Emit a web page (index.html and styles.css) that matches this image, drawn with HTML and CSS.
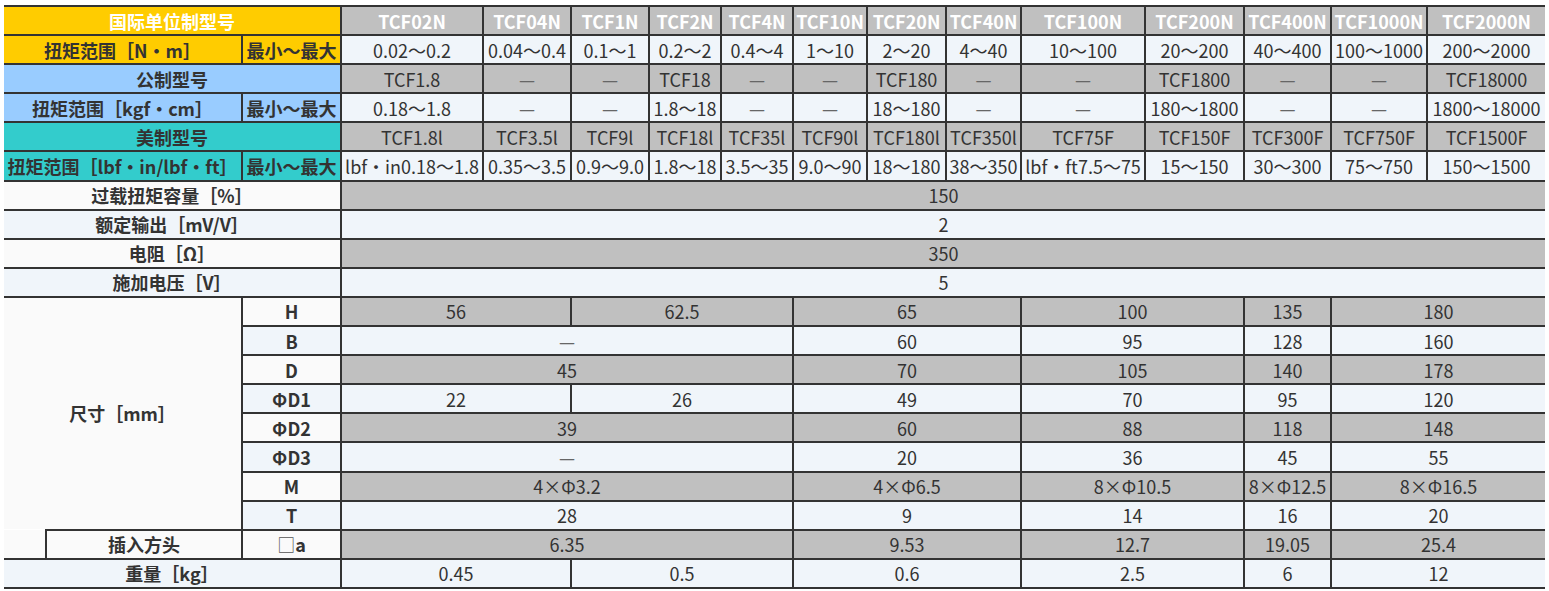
FILE: index.html
```html
<!DOCTYPE html>
<html lang="zh-CN">
<head>
<meta charset="utf-8">
<title>TCF 规格表</title>
<link rel="stylesheet" href="styles.css">
</head>
<body>
<table class="spec">
  <colgroup>
    <col class="c-a"><col class="c-b"><col class="c-c">
    <col class="d1"><col class="d2"><col class="d3"><col class="d4"><col class="d5"><col class="d6"><col class="d7"><col class="d8"><col class="d9"><col class="d10"><col class="d11"><col class="d12"><col class="d13">
  </colgroup>
  <tr>
    <th colspan="3" class="yel hd">国际单位制型号</th>
    <th class="gr hd">TCF02N</th><th class="gr hd">TCF04N</th><th class="gr hd">TCF1N</th><th class="gr hd">TCF2N</th><th class="gr hd">TCF4N</th><th class="gr hd">TCF10N</th><th class="gr hd">TCF20N</th><th class="gr hd">TCF40N</th><th class="gr hd">TCF100N</th><th class="gr hd">TCF200N</th><th class="gr hd">TCF400N</th><th class="gr hd">TCF1000N</th><th class="gr hd">TCF2000N</th>
  </tr>
  <tr>
    <td colspan="2" class="yel lb">扭矩范围［N・m］</td><td class="yel lb">最小～最大</td>
    <td class="lt">0.02～0.2</td><td class="lt">0.04～0.4</td><td class="lt">0.1～1</td><td class="lt">0.2～2</td><td class="lt">0.4～4</td><td class="lt">1～10</td><td class="lt">2～20</td><td class="lt">4～40</td><td class="lt">10～100</td><td class="lt">20～200</td><td class="lt">40～400</td><td class="lt">100～1000</td><td class="lt">200～2000</td>
  </tr>
  <tr>
    <td colspan="3" class="blu lb">公制型号</td>
    <td class="gr">TCF1.8</td><td class="gr dash">—</td><td class="gr dash">—</td><td class="gr">TCF18</td><td class="gr dash">—</td><td class="gr dash">—</td><td class="gr">TCF180</td><td class="gr dash">—</td><td class="gr dash">—</td><td class="gr">TCF1800</td><td class="gr dash">—</td><td class="gr dash">—</td><td class="gr">TCF18000</td>
  </tr>
  <tr>
    <td colspan="2" class="blu lb">扭矩范围［kgf・cm］</td><td class="blu lb">最小～最大</td>
    <td class="lt">0.18～1.8</td><td class="lt dash">—</td><td class="lt dash">—</td><td class="lt">1.8～18</td><td class="lt dash">—</td><td class="lt dash">—</td><td class="lt">18～180</td><td class="lt dash">—</td><td class="lt dash">—</td><td class="lt">180～1800</td><td class="lt dash">—</td><td class="lt dash">—</td><td class="lt">1800～18000</td>
  </tr>
  <tr>
    <td colspan="3" class="tea lb">美制型号</td>
    <td class="gr">TCF1.8l</td><td class="gr">TCF3.5l</td><td class="gr">TCF9l</td><td class="gr">TCF18l</td><td class="gr">TCF35l</td><td class="gr">TCF90l</td><td class="gr">TCF180l</td><td class="gr">TCF350l</td><td class="gr">TCF75F</td><td class="gr">TCF150F</td><td class="gr">TCF300F</td><td class="gr">TCF750F</td><td class="gr">TCF1500F</td>
  </tr>
  <tr>
    <td colspan="2" class="tea lb">扭矩范围［lbf・in/lbf・ft］</td><td class="tea lb">最小～最大</td>
    <td class="lt">lbf・in0.18～1.8</td><td class="lt">0.35～3.5</td><td class="lt">0.9～9.0</td><td class="lt">1.8～18</td><td class="lt">3.5～35</td><td class="lt">9.0～90</td><td class="lt">18～180</td><td class="lt">38～350</td><td class="lt">lbf・ft7.5～75</td><td class="lt">15～150</td><td class="lt">30～300</td><td class="lt">75～750</td><td class="lt">150～1500</td>
  </tr>
  <tr>
    <td colspan="3" class="wh lb">过载扭矩容量［%］</td><td colspan="13" class="gr">150</td>
  </tr>
  <tr>
    <td colspan="3" class="lt lb">额定输出［mV/V］</td><td colspan="13" class="lt">2</td>
  </tr>
  <tr>
    <td colspan="3" class="wh lb">电阻［Ω］</td><td colspan="13" class="gr">350</td>
  </tr>
  <tr>
    <td colspan="3" class="lt lb">施加电压［V］</td><td colspan="13" class="lt">5</td>
  </tr>
  <tr>
    <td colspan="2" rowspan="8" class="wh lb">尺寸［mm］</td><td class="wh lb">H</td>
    <td colspan="2" class="gr">56</td><td colspan="3" class="gr">62.5</td><td colspan="3" class="gr">65</td><td colspan="2" class="gr">100</td><td class="gr">135</td><td colspan="2" class="gr">180</td>
  </tr>
  <tr>
    <td class="lt lb">B</td>
    <td colspan="5" class="lt dash">—</td><td colspan="3" class="lt">60</td><td colspan="2" class="lt">95</td><td class="lt">128</td><td colspan="2" class="lt">160</td>
  </tr>
  <tr>
    <td class="wh lb">D</td>
    <td colspan="5" class="gr">45</td><td colspan="3" class="gr">70</td><td colspan="2" class="gr">105</td><td class="gr">140</td><td colspan="2" class="gr">178</td>
  </tr>
  <tr>
    <td class="lt lb">ΦD1</td>
    <td colspan="2" class="lt">22</td><td colspan="3" class="lt">26</td><td colspan="3" class="lt">49</td><td colspan="2" class="lt">70</td><td class="lt">95</td><td colspan="2" class="lt">120</td>
  </tr>
  <tr>
    <td class="wh lb">ΦD2</td>
    <td colspan="5" class="gr">39</td><td colspan="3" class="gr">60</td><td colspan="2" class="gr">88</td><td class="gr">118</td><td colspan="2" class="gr">148</td>
  </tr>
  <tr>
    <td class="lt lb">ΦD3</td>
    <td colspan="5" class="lt dash">—</td><td colspan="3" class="lt">20</td><td colspan="2" class="lt">36</td><td class="lt">45</td><td colspan="2" class="lt">55</td>
  </tr>
  <tr>
    <td class="wh lb">M</td>
    <td colspan="5" class="gr">4×Φ3.2</td><td colspan="3" class="gr">4×Φ6.5</td><td colspan="2" class="gr">8×Φ10.5</td><td class="gr">8×Φ12.5</td><td colspan="2" class="gr">8×Φ16.5</td>
  </tr>
  <tr>
    <td class="lt lb">T</td>
    <td colspan="5" class="lt">28</td><td colspan="3" class="lt">9</td><td colspan="2" class="lt">14</td><td class="lt">16</td><td colspan="2" class="lt">20</td>
  </tr>
  <tr>
    <td class="wh gap"></td><td class="wh lb">插入方头</td><td class="wh lb"><span class="sq">□</span>a</td>
    <td colspan="5" class="gr">6.35</td><td colspan="3" class="gr">9.53</td><td colspan="2" class="gr">12.7</td><td class="gr">19.05</td><td colspan="2" class="gr">25.4</td>
  </tr>
  <tr>
    <td colspan="3" class="lt lb">重量［kg］</td>
    <td colspan="2" class="lt">0.45</td><td colspan="3" class="lt">0.5</td><td colspan="3" class="lt">0.6</td><td colspan="2" class="lt">2.5</td><td class="lt">6</td><td colspan="2" class="lt">12</td>
  </tr>
</table>
</body>
</html>
```

FILE: styles.css
```css
html, body {
  margin: 0;
  padding: 0;
  background: #ffffff;
}

body {
  font-family: "Noto Sans CJK SC", "Noto Sans", sans-serif;
}

.spec {
  border-collapse: collapse;
  table-layout: fixed;
  width: 1541px;
  margin: 5px 0 0 4px;
  border-left: hidden;
  border-right: hidden;
  font-size: 18px;
  color: #333333;
}

.c-a { width: 42px; }
.c-b { width: 196px; }
.c-c { width: 99px; }
.d1 { width: 142px; }
.d2 { width: 88px; }
.d3 { width: 78px; }
.d4 { width: 72px; }
.d5 { width: 72px; }
.d6 { width: 74px; }
.d7 { width: 79px; }
.d8 { width: 75px; }
.d9 { width: 124px; }
.d10 { width: 99px; }
.d11 { width: 87px; }
.d12 { width: 96px; }
.d13 { width: 118px; }

.spec tr {
  height: 29.1px;
}

.spec th,
.spec td {
  border: 2px solid #333333;
  padding: 0;
  text-align: center;
  vertical-align: middle;
  line-height: 24px;
  white-space: nowrap;
  overflow: hidden;
  font-weight: 400;
}

.hd {
  color: #ffffff;
  font-weight: 700 !important;
}

.lb {
  font-weight: 700 !important;
}

.yel { background: #ffcc00; }
.blu { background: #99ccff; }
.tea { background: #33cccc; }
.gr  { background: #c0c0c0; }
.lt  { background: #f0f5fa; }
.wh  { background: #fafafa; }

.dash {
  color: #666666;
}

.gap {
  border-top-style: hidden !important;
}

.sq {
  font-weight: 400;
  color: #555555;
}
```
